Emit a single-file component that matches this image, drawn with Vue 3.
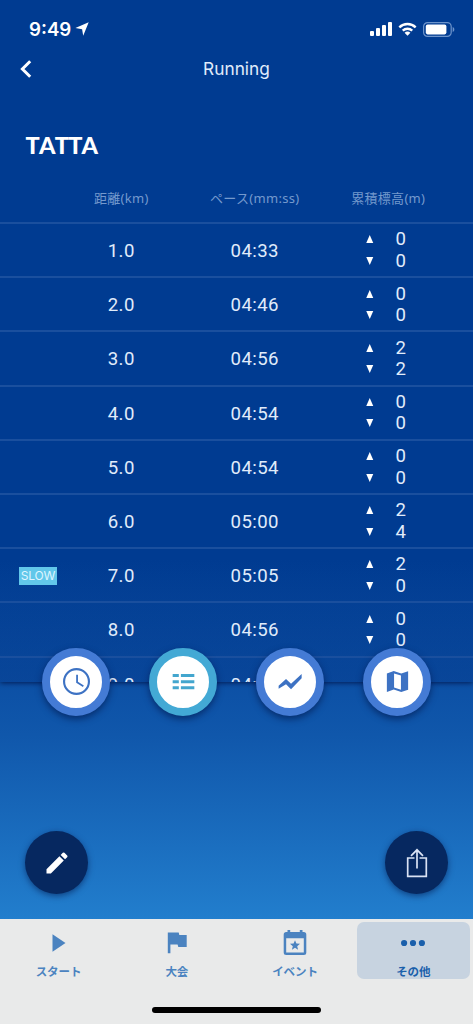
<template>
  <div class="screen">
    <header class="status-bar">
      <div class="clock">
        <span>9:49</span>
        <svg class="location" viewBox="0 0 14 14"><path d="M13.7.3 8.2 13.7 7.1 7.2.4 5.9Z" /></svg>
      </div>
      <div class="indicators">
        <svg class="signal" viewBox="0 0 22 14">
          <rect x="0" y="9" width="4" height="5" rx="1" />
          <rect x="6" y="6" width="4" height="8" rx="1" />
          <rect x="12" y="3" width="4" height="11" rx="1" />
          <rect x="18" y="0" width="4" height="14" rx="1" />
        </svg>
        <svg class="wifi" viewBox="0 0 20 14">
          <path class="wave" d="M1.4 5.2a12.3 12.3 0 0 1 17.2 0" />
          <path class="wave" d="M5 8.7a7.2 7.2 0 0 1 10 0" />
          <path d="M10 14 6.9 11a4.5 4.5 0 0 1 6.2 0Z" />
        </svg>
        <svg class="battery" viewBox="0 0 32 15">
          <rect class="case" x=".6" y=".6" width="27.6" height="13.8" rx="4" />
          <rect x="2.8" y="2.6" width="20.6" height="9.8" rx="1.8" />
          <path class="tip" d="M29.7 5c2.2.7 2.2 4.3 0 5Z" />
        </svg>
      </div>
    </header>

    <nav class="title-bar">
      <svg class="back" viewBox="0 0 12 18"><path d="M10.2 1.3 2.4 9l7.8 7.7" /></svg>
      <h1>Running</h1>
    </nav>

    <section class="panel">
      <div class="logo">TATTA</div>
      <div class="row head">
        <span></span>
        <span>距離(km)</span>
        <span>ペース(mm:ss)</span>
        <span>累積標高(m)</span>
      </div>
      <div v-for="lap in laps" :key="lap.km" class="row lap">
        <span class="tag-cell"><em v-if="lap.slow" class="tag">SLOW</em></span>
        <span class="value">{{ lap.km }}</span>
        <span class="value">{{ lap.pace }}</span>
        <div class="elevation">
          <div class="climb">
            <svg viewBox="0 0 7 8"><path d="M3.5 0 7 8H0Z" /></svg>
            <span>{{ lap.up }}</span>
          </div>
          <div class="climb">
            <svg viewBox="0 0 7 8"><path d="M0 0h7L3.5 8Z" /></svg>
            <span>{{ lap.down }}</span>
          </div>
        </div>
      </div>
    </section>

    <div class="modes">
      <button v-for="mode in modes" :key="mode.name" class="mode" :class="{ active: mode.active }">
        <svg viewBox="0 0 24 24"><path :d="mode.icon" fill-rule="evenodd" /></svg>
      </button>
    </div>

    <div class="actions">
      <button class="action">
        <svg class="pencil" viewBox="0 0 24 24">
          <path d="M3 17.25V21h3.75L17.81 9.94l-3.75-3.75L3 17.25zM20.71 7.04a1 1 0 0 0 0-1.41l-2.34-2.34a1 1 0 0 0-1.41 0l-1.83 1.83 3.75 3.75 1.83-1.83z" />
        </svg>
      </button>
      <button class="action">
        <svg class="share" viewBox="0 0 22 30">
          <path d="M8.5 10H1.7v18.3h18.6V10h-6.8M11 20.5V1.8M5 7.8l6-6 6 6" />
        </svg>
      </button>
    </div>

    <footer class="tabs">
      <div v-for="tab in tabs" :key="tab.label" class="tab" :class="{ active: tab.active }">
        <svg :viewBox="tab.box"><path :d="tab.icon" fill-rule="evenodd" /></svg>
        <span>{{ tab.label }}</span>
      </div>
      <div class="home-indicator"></div>
    </footer>
  </div>
</template>

<script setup>
const laps = [
  { km: '1.0', pace: '04:33', up: 0, down: 0 },
  { km: '2.0', pace: '04:46', up: 0, down: 0 },
  { km: '3.0', pace: '04:56', up: 2, down: 2 },
  { km: '4.0', pace: '04:54', up: 0, down: 0 },
  { km: '5.0', pace: '04:54', up: 0, down: 0 },
  { km: '6.0', pace: '05:00', up: 2, down: 4 },
  { km: '7.0', pace: '05:05', up: 2, down: 0, slow: true },
  { km: '8.0', pace: '04:56', up: 0, down: 0 },
  { km: '9.0', pace: '04:58', up: 0, down: 0 }
]

const modes = [
  {
    name: 'time',
    icon: 'M12 0a12 12 0 1 0 0 24 12 12 0 0 0 0-24zm0 1.9a10.1 10.1 0 1 1 0 20.2 10.1 10.1 0 0 1 0-20.2zM11.7 6h1.6v6.3l5.2 3.2-.8 1.4-6-3.7z'
  },
  {
    name: 'laps',
    active: true,
    icon: 'M1.6 4.8h5.9v2.9H1.6zM9.5 4.8h12.9v2.9H9.5zM1.6 10.7h5.9v2.9H1.6zM9.5 10.7h12.9v2.9H9.5zM1.6 16.6h5.9v2.9H1.6zM9.5 16.6h12.9v2.9H9.5z'
  },
  { name: 'chart', icon: 'M.6 16 7.7 9.6l4.8 4.6L22.7 4.8v4L12.5 19.4l-4.8-4.8-7.1 4.3z' },
  {
    name: 'map',
    icon: 'M1.8 4.2 8.4 2l7.2 2.2 6.6-2.1v17.7L15.6 22l-7.2-2.3L1.8 22zM8.7 4.3v13.4l6.6 2.1V6.3z'
  }
]

const tabs = [
  { label: 'スタート', box: '0 0 24 24', icon: 'M5.5 3.2v17.6L18.5 12z' },
  { label: '大会', box: '0 0 24 24', icon: 'M2.8 1.5h10.9l.6 2.6h7.4v12h-8.4l-.7-2.6H5.4v8.8H2.8z' },
  {
    label: 'イベント',
    box: '0 0 24 26',
    icon: 'M4.5 0h2.7v2h9.6V0h2.7v2h1.3a2.5 2.5 0 0 1 2.5 2.5v18a2.5 2.5 0 0 1-2.5 2.5H3.2a2.5 2.5 0 0 1-2.5-2.5v-18A2.5 2.5 0 0 1 3.2 2h1.3zM3.2 8.2v14.4h17.6V8.2zM12 10.2l1.4 3.3 3.6.3-2.8 2.4.9 3.5-3.1-1.9-3.1 1.9.9-3.5L7 13.8l3.6-.3z'
  },
  {
    label: 'その他',
    active: true,
    box: '0 0 24 24',
    icon: 'M0 12a3.1 3.1 0 1 0 6.2 0 3.1 3.1 0 1 0-6.2 0M8.9 12a3.1 3.1 0 1 0 6.2 0 3.1 3.1 0 1 0-6.2 0M17.8 12a3.1 3.1 0 1 0 6.2 0 3.1 3.1 0 1 0-6.2 0'
  }
]
</script>

<style>
body {
  background: #fff;
}
</style>

<style scoped>
.screen {
  position: relative;
  display: flex;
  flex-direction: column;
  width: 473px;
  height: 1024px;
  overflow: hidden;
  color: #e0ecfb;
  background: linear-gradient(#003b91 0, #003b91 560px, #0c50a5 682px, #1057ab 735px, #227ecd 919px);
  font-family: Inter, "Noto Sans CJK JP", sans-serif;
}

svg {
  display: block;
  fill: currentColor;
  flex-shrink: 0;
}

button {
  padding: 0;
  border: 0;
}

.status-bar {
  display: flex;
  justify-content: space-between;
  align-items: center;
  height: 58px;
  flex-shrink: 0;
  padding: 0 18px 0 29px;
  color: #fff;
}

.clock {
  display: flex;
  align-items: center;
  gap: 4px;
  font-size: 18.7px;
  font-weight: 600;
}

.location {
  width: 14px;
  height: 14px;
}

.indicators {
  display: flex;
  align-items: center;
  gap: 6px;
}

.signal {
  width: 22px;
  height: 14px;
}

.wifi {
  width: 19px;
  height: 14px;
}

.wave {
  fill: none;
  stroke: #fff;
  stroke-width: 2.5;
}

.battery {
  width: 32px;
  height: 15px;
}

.case {
  fill: none;
  stroke: #6d94cb;
  stroke-width: 1.2;
}

.tip {
  fill: #6d94cb;
}

.title-bar {
  display: grid;
  grid-template-columns: 1fr auto 1fr;
  align-items: center;
  height: 22px;
  flex-shrink: 0;
  padding: 0 20px;
}

.back {
  width: 12px;
  height: 18px;
  fill: none;
  stroke: #fff;
  stroke-width: 3;
}

h1 {
  margin: -2px 0 0;
  font-size: 17.3px;
  font-weight: 400;
}

.panel {
  display: flex;
  flex-direction: column;
  height: 602px;
  flex-shrink: 0;
  overflow: hidden;
  background: linear-gradient(transparent 480px, rgba(0, 45, 125, 0.3) 602px);
  box-shadow: 0 1px 5px rgba(0, 20, 70, 0.85);
  clip-path: inset(0 0 -10px 0);
}

.logo {
  height: 30px;
  margin: 50px 0 0 25.5px;
  flex-shrink: 0;
  color: #fff;
  font: 900 23.5px/30px Lato, sans-serif;
  font-kerning: none;
  letter-spacing: -0.75px;
}

.row {
  display: grid;
  grid-template-columns: 54.5px repeat(3, 133.5px);
  align-items: center;
  flex-shrink: 0;
  text-align: center;
}

.head {
  height: 62px;
  padding-top: 14px;
  box-sizing: border-box;
  color: #7499cd;
  font: 400 13px/20px "Noto Sans", "Noto Sans CJK JP", sans-serif;
  letter-spacing: 0.3px;
}

.lap {
  height: 54.2px;
  box-sizing: border-box;
  border-top: 2px solid #1a4f9e;
  font: 400 18.6px/22px Roboto, sans-serif;
  letter-spacing: 0.4px;
}

.value {
  padding-top: 2px;
}

.tag-cell {
  padding: 1px 0 0 19px;
  text-align: left;
}

.tag {
  display: block;
  width: 38px;
  height: 18px;
  background: #62c7ea;
  color: #dff5ff;
  font: 400 12px/18px Inter, sans-serif;
  letter-spacing: -0.2px;
  text-align: center;
}

.elevation {
  padding: 0 0 0 44.5px;
}

.climb {
  display: flex;
  align-items: center;
  height: 21.5px;
  gap: 22px;
}

.climb svg {
  width: 7.5px;
  height: 8px;
  color: #fff;
}

.modes {
  display: flex;
  justify-content: space-between;
  height: 68px;
  margin: -34.5px 42px 0;
  flex-shrink: 0;
  position: relative;
}

.mode {
  display: flex;
  align-items: center;
  justify-content: center;
  width: 68px;
  height: 68px;
  box-sizing: border-box;
  border: 8.5px solid #447bd5;
  border-radius: 50%;
  background: #fff;
  color: #3d72c3;
  box-shadow: 0 3px 7px rgba(0, 20, 70, 0.6);
}

.mode.active {
  border-color: #43a9d5;
  color: #43a6ce;
}

.mode svg {
  width: 27px;
  height: 27px;
}

.mode:nth-child(n + 2) svg {
  width: 25px;
  height: 25px;
}

.actions {
  display: flex;
  justify-content: space-between;
  margin: 115.5px 25px 0;
}

.action {
  display: flex;
  align-items: center;
  justify-content: center;
  width: 63px;
  height: 63px;
  border-radius: 50%;
  background: #062860;
  color: #fff;
  box-shadow: 0 2px 6px rgba(0, 20, 70, 0.55);
}

.pencil {
  width: 28px;
  height: 28px;
}

.share {
  width: 22px;
  height: 30px;
  fill: none;
  stroke: #d9e2f4;
  stroke-width: 1.7;
}

.tabs {
  display: grid;
  grid-template-columns: repeat(4, 1fr);
  grid-template-rows: 60px 1fr;
  height: 105px;
  margin-top: auto;
  flex-shrink: 0;
  background: #e9eaea;
}

.tab {
  display: flex;
  flex-direction: column;
  align-items: center;
  height: 57px;
  margin: 3px 3px 0 2px;
  padding-top: 8px;
  box-sizing: border-box;
  border-radius: 7px;
  color: #4b83c0;
  font: 700 11.5px/17px "Noto Sans CJK JP", sans-serif;
}

.tab svg {
  width: 24px;
  height: 26px;
  margin-bottom: 7px;
}

.tab.active {
  background: #c7d3e0;
  color: #1a5fab;
}

.home-indicator {
  grid-column: 1 / -1;
  justify-self: center;
  width: 169px;
  height: 6px;
  margin-top: 28px;
  border-radius: 3px;
  background: #000;
}
</style>
